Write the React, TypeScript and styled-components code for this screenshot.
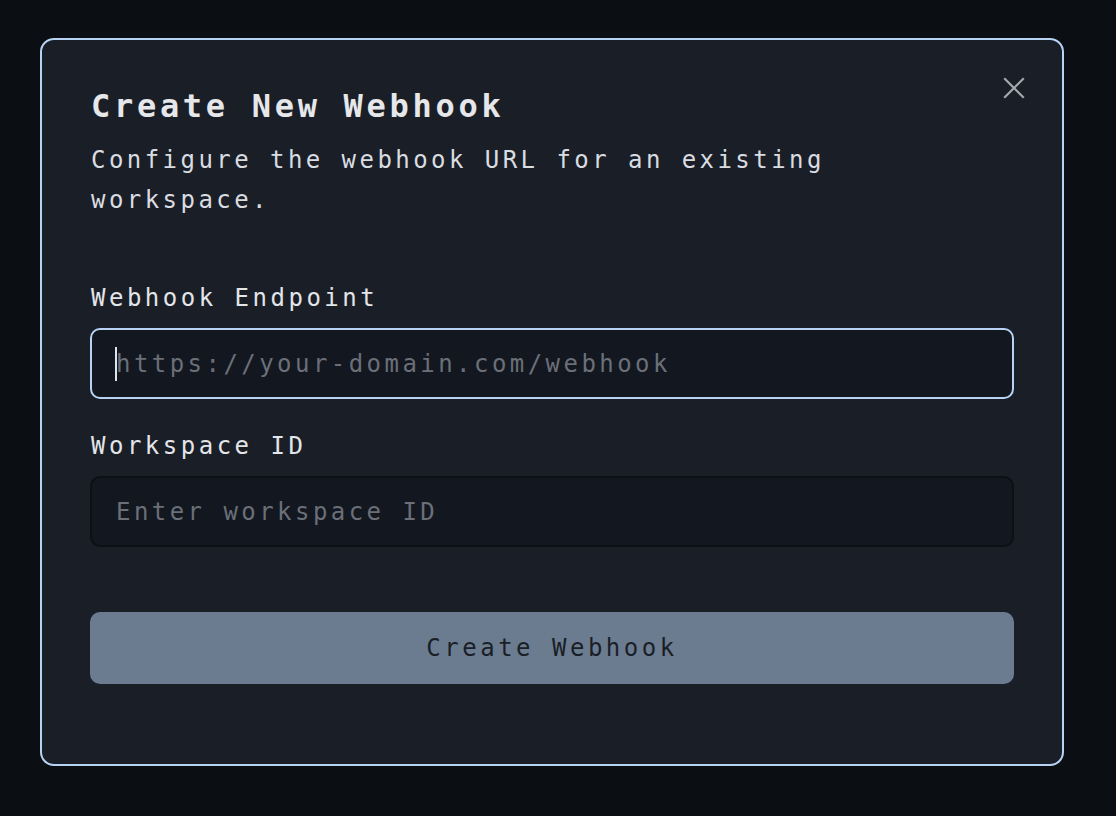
import React from "react";
import styled, { createGlobalStyle } from "styled-components";

const GlobalStyle = createGlobalStyle`
  html, body {
    margin: 0;
    padding: 0;
    background: #0b0e13;
  }
  * {
    box-sizing: border-box;
  }
`;

const SPage = styled.div`
  min-height: 816px;
  padding: 38px 0 0 40px;
  font-family: "DejaVu Sans Mono", "Liberation Mono", monospace;
`;

const SModal = styled.div`
  position: relative;
  width: 1024px;
  height: 728px;
  background: #1a1f27;
  border: 2px solid #b7d3f3;
  border-radius: 14px;
  padding: 46px 48px 0 49px;
  display: flex;
  flex-direction: column;
`;

const SClose = styled.button`
  position: absolute;
  top: 36px;
  right: 36px;
  width: 24px;
  height: 24px;
  padding: 0;
  border: none;
  background: transparent;
  display: flex;
  align-items: center;
  justify-content: center;
  cursor: pointer;
`;

const STitle = styled.h2`
  margin: 0;
  font-size: 32px;
  line-height: 40px;
  font-weight: 700;
  letter-spacing: 3.7px;
  color: #e6e7ea;
`;

const SDescription = styled.p`
  margin: 14px 0 0 0;
  width: 770px;
  font-size: 24px;
  line-height: 40px;
  letter-spacing: 3.45px;
  color: #d9dce1;
`;

const SForm = styled.form`
  margin-top: 60px;
  display: flex;
  flex-direction: column;
`;

const SField = styled.div<{ $gap?: number }>`
  display: flex;
  flex-direction: column;
  gap: 12px;
  margin-bottom: ${(p) => p.$gap ?? 0}px;
`;

const SLabel = styled.label`
  font-size: 24px;
  line-height: 36px;
  letter-spacing: 3.5px;
  color: #e3e5e9;
`;

const SInputWrap = styled.div`
  position: relative;
  margin-left: -1px;
`;

const SInput = styled.input<{ $focused?: boolean }>`
  width: 100%;
  height: 71px;
  padding: 0 24px;
  background: #131720;
  border: ${(p) => (p.$focused ? "2px solid #b7d3f3" : "2px solid #0c0f14")};
  border-radius: 10px;
  font-family: inherit;
  font-size: 24px;
  letter-spacing: 3.45px;
  color: #e3e5e9;
  outline: none;
  &::placeholder {
    color: #6a6f78;
  }
`;

const SCaret = styled.span`
  position: absolute;
  left: 25px;
  top: 19px;
  width: 2px;
  height: 34px;
  background: #dfe3ea;
`;

const SSubmit = styled.button`
  margin: 65px 0 0 -1px;
  height: 72px;
  width: calc(100% + 1px);
  border: none;
  border-radius: 10px;
  background: #6b7c91;
  color: #1a1f27;
  font-family: inherit;
  font-size: 24px;
  letter-spacing: 3.5px;
  cursor: not-allowed;
`;

function CloseIcon() {
  return (
    <svg width="22" height="22" viewBox="0 0 22 22" fill="none">
      <path
        d="M2 2 L20 20 M20 2 L2 20"
        stroke="#a3a7ae"
        strokeWidth="2.2"
        strokeLinecap="square"
      />
    </svg>
  );
}

export default function App() {
  return (
    <>
      <GlobalStyle />
      <SPage>
        <SModal>
          <SClose aria-label="Close">
            <CloseIcon />
          </SClose>
          <STitle>Create New Webhook</STitle>
          <SDescription>
            Configure the webhook URL for an existing workspace.
          </SDescription>
          <SForm onSubmit={(e) => e.preventDefault()}>
            <SField $gap={29}>
              <SLabel htmlFor="endpoint">Webhook Endpoint</SLabel>
              <SInputWrap>
                <SInput
                  id="endpoint"
                  $focused
                  placeholder="https://your-domain.com/webhook"
                />
                <SCaret />
              </SInputWrap>
            </SField>
            <SField>
              <SLabel htmlFor="workspace">Workspace ID</SLabel>
              <SInputWrap>
                <SInput id="workspace" placeholder="Enter workspace ID" />
              </SInputWrap>
            </SField>
            <SSubmit type="submit" disabled>
              Create Webhook
            </SSubmit>
          </SForm>
        </SModal>
      </SPage>
    </>
  );
}
